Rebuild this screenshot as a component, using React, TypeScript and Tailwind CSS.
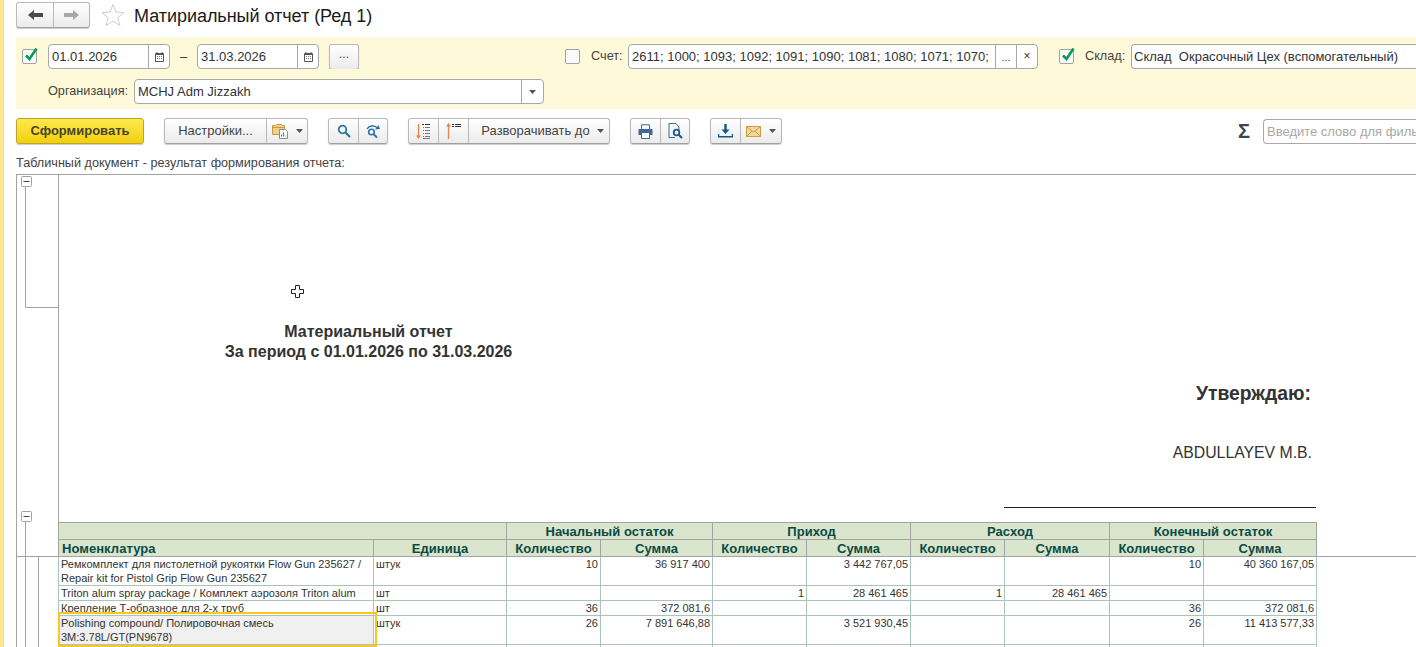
import React from "react";

const Check = ({ on }: { on?: boolean }) => (
  <span className="relative block w-[15px] h-[15px] shrink-0 rounded-[2px] border border-[#a3a3a3] bg-[#fafafa]">
    {on && (
      <svg className="absolute left-[1px] top-[-4px]" width="15" height="16" viewBox="0 0 15 16">
        <path d="M2 9.5 L5.5 13 L12.5 2.5" fill="none" stroke="#0b9b50" strokeWidth="2.6" />
      </svg>
    )}
  </span>
);

const Calendar = () => (
  <svg width="9" height="10" viewBox="0 0 9 10">
    <path d="M0.5 1.5h8v8h-8z" fill="none" stroke="#555" />
    <path d="M1 1h7v2H1z" fill="#555" />
    <path d="M2 0v2M7 0v2" stroke="#555" />
    <path d="M2 4.5h1M4 4.5h1M6 4.5h1M2 6.5h1M4 6.5h1M6 6.5h1" stroke="#777" />
  </svg>
);

const Caret = () => (
  <svg width="7" height="4" viewBox="0 0 7 4" className="shrink-0">
    <path d="M0 0h7L3.5 4z" fill="#555" />
  </svg>
);

const DateField = ({ v }: { v: string }) => (
  <div className="flex h-[25px] w-[122px] shrink-0 rounded-[4px] border border-[#a8a8a8] bg-white">
    <div className="flex w-[100px] items-center border-r border-[#a8a8a8] pl-[3px] text-[13px] text-[#333]">{v}</div>
    <div className="flex flex-1 items-center justify-center"><Calendar /></div>
  </div>
);

const btn =
  "flex h-[26px] items-stretch rounded-[3px] border border-[#b9b9b9] border-b-[#9f9f9f] bg-gradient-to-b from-white to-[#ebebeb] shadow-[0_1px_1px_rgba(0,0,0,0.2)] text-[#444]";

const Seg = ({ w, children, last }: { w: string; children?: React.ReactNode; last?: boolean }) => (
  <div className={`flex items-center justify-center ${w} ${last ? "" : "border-r border-[#b9b9b9]"}`}>{children}</div>
);

const Search = () => (
  <svg width="14" height="14" viewBox="0 0 14 14">
    <circle cx="5.5" cy="5.5" r="3.8" fill="none" stroke="#2d74a8" strokeWidth="1.8" />
    <path d="M8.5 8.5L13 13" stroke="#2d74a8" strokeWidth="2.2" />
  </svg>
);

const SearchAgain = () => (
  <svg width="15" height="15" viewBox="0 0 15 15">
    <circle cx="5.5" cy="8" r="2.8" fill="none" stroke="#2d74a8" strokeWidth="1.6" />
    <path d="M7.8 10.3L11 13.6" stroke="#2d74a8" strokeWidth="2" />
    <path d="M1 5C3 1.5 8 1 11 3.5" fill="none" stroke="#2d74a8" strokeWidth="1.4" />
    <path d="M9 5.5L14 5L12.5 1z" fill="#2d74a8" />
  </svg>
);

const SortDown = () => (
  <svg width="15" height="17" viewBox="0 0 15 17">
    <path d="M2.5 1v14" stroke="#e8824a" strokeWidth="1.3" />
    <path d="M0 12.5h5L2.5 16z" fill="#e8824a" />
    <path d="M6 1.5h2M9 1.5h5" stroke="#333" />
    <path d="M9 4.5h5M9 7.5h5M9 10.5h5M9 13.5h5M7 4.5h1M7 7.5h1M7 10.5h1M7 13.5h1M7 15.5h7" stroke="#777" />
  </svg>
);

const SortUp = () => (
  <svg width="15" height="17" viewBox="0 0 15 17" className="mt-[-1px]">
    <path d="M2.5 2v15" stroke="#e8824a" strokeWidth="1.3" />
    <path d="M0 4.5h5L2.5 1z" fill="#e8824a" />
    <path d="M6 2.500h2M6 4.500h2M9 2.500h6M9 4.500h6" stroke="#333" />
  </svg>
);

const Printer = () => (
  <svg width="15" height="15" viewBox="0 0 15 15">
    <path d="M3.500 5V0.800h8V5" fill="none" stroke="#3d6a94" />
    <path d="M0.500 5h14v6h-14z" fill="#3d6a94" />
    <path d="M3.500 8.500h8v6h-8z" fill="#fff" stroke="#3d6a94" />
  </svg>
);

const Preview = () => (
  <svg width="15" height="16" viewBox="0 0 15 16">
    <path d="M1 .5h7l3 3.500V7M1 .5V14.500h6" fill="none" stroke="#3d6a94" />
    <circle cx="8.500" cy="9.500" r="2.800" fill="none" stroke="#1f5a88" strokeWidth="1.800" />
    <path d="M10.500 11.500L14 15" stroke="#1f5a88" strokeWidth="2.200" />
  </svg>
);

const Download = () => (
  <svg width="15" height="14" viewBox="0 0 15 14">
    <path d="M7.500 0v6" stroke="#0f5a8c" strokeWidth="2.400" />
    <path d="M3.500 5.500h8l-4 4.500z" fill="#0f5a8c" />
    <path d="M.5 10v2.700h14V10" fill="none" stroke="#0f5a8c" strokeWidth="1.400" />
  </svg>
);

const Mail = () => (
  <svg width="15" height="11" viewBox="0 0 15 11">
    <path d="M.5 .5h14v10H.5z" fill="#f5d99a" stroke="#cf9a45" />
    <path d="M.5 .5L7.500 6l7-5.500M.5 10.500L6 5M14.500 10.500L9 5" fill="none" stroke="#cf9a45" />
  </svg>
);

const Folder = () => (
  <svg width="17" height="16" viewBox="0 0 17 16">
    <path d="M.5 2.500h3l1-1h5l1 1h2v9H.5z" fill="#f3cf86" stroke="#c59a4a" />
    <path d="M.5 4.500h12" stroke="#c59a4a" />
    <path d="M7.500 6.500h6l2 2v7h-8z" fill="#fff" stroke="#7f8fa0" />
    <path d="M9.500 13.500v-2" stroke="#d9483a" strokeWidth="1.200" />
    <path d="M11.500 13.500v-4" stroke="#3fa34d" strokeWidth="1.200" />
    <path d="M13.500 13.500v-1" stroke="#e0a020" strokeWidth="1.200" />
  </svg>
);

const cols = [315, 133, 94, 112, 94, 104, 94, 105, 94, 113];

const rows: { h: string; name: React.ReactNode; unit: string; v: string[] }[] = [
  {
    h: "h-[29px]",
    name: <>Ремкомплект для пистолетной рукоятки Flow Gun 235627 /<br />Repair kit for Pistol Grip Flow Gun 235627</>,
    unit: "штук",
    v: ["10", "36 917 400", "", "3 442 767,05", "", "", "10", "40 360 167,05"],
  },
  {
    h: "h-[15px]",
    name: "Triton alum spray package / Комплект аэрозоля Triton alum",
    unit: "шт",
    v: ["", "", "1", "28 461 465", "1", "28 461 465", "", ""],
  },
  {
    h: "h-[15px]",
    name: "Крепление Т-образное для 2-х труб",
    unit: "шт",
    v: ["36", "372 081,6", "", "", "", "", "36", "372 081,6"],
  },
  {
    h: "h-[29px]",
    name: <>Polishing compound/ Полировочная смесь<br />3M:3.78L/GT(PN9678)</>,
    unit: "штук",
    v: ["26", "7 891 646,88", "", "3 521 930,45", "", "", "26", "11 413 577,33"],
  },
];

const th = "border border-[#a3a3a3] bg-[#d9e5cc] p-0 text-center align-middle text-[13px] font-bold leading-[15px] text-[#0a4a46] tracking-[0.05px]";
const td = "border border-[#a9c4b8] px-[4px] py-0 align-top text-[11px] leading-[14px] text-[#333] overflow-hidden whitespace-nowrap";

export default function App() {
  return (
    <div className="relative flex h-[647px] w-[1416px] overflow-hidden bg-white font-['Liberation_Sans',Arial,sans-serif]">
      <div className="w-[4px] shrink-0 border-r border-[#d8d8d8] bg-[#fbe88f]" />
      <div className="flex min-w-0 flex-1 flex-col pl-[12px]">
        {/* title */}
        <div className="mt-[3px] flex h-[24px] items-center">
          <div className={`${btn} h-[24px] w-[74px]`}>
            <Seg w="w-[37px]">
              <svg width="15" height="10" viewBox="0 0 15 10"><path d="M0 5L6 0v3h9v4H6v3z" fill="#4a4a4a" /></svg>
            </Seg>
            <Seg w="flex-1" last>
              <svg width="15" height="10" viewBox="0 0 15 10"><path d="M15 5L9 0v3H0v4h9v3z" fill="#a8a8a8" /></svg>
            </Seg>
          </div>
          <svg className="ml-[11px]" width="24" height="24" viewBox="0 0 24 24">
            <path d="M12 1.500l3 7.500 8 .6-6.100 5.100 2 7.800L12 18.200 5.100 22.500l2-7.800L1 9.600l8-.6z" fill="#fff" stroke="#c9ced6" />
          </svg>
          <div className="ml-[9px] pt-[2px] text-[18px] leading-[24px] tracking-[-0.04px] text-[#1a1a1a]">Матириальный отчет (Ред 1)</div>
        </div>

        {/* filter panel */}
        <div className="mt-[10px] flex h-[72px] flex-col gap-[10px] bg-[#fef9d9] pt-[7px] text-[13px] text-[#444]">
          <div className="flex h-[25px] items-center overflow-hidden">
            <div className="ml-[6px]"><Check on /></div>
            <div className="ml-[11px]"><DateField v="01.01.2026" /></div>
            <div className="w-[27px] text-center text-[#333]">–</div>
            <DateField v="31.03.2026" />
            <div className={`${btn} ml-[10px] h-[25px] w-[30px] items-center justify-center text-[12px]`}>...</div>
            <div className="ml-[206px]"><Check /></div>
            <div className="ml-[11px] w-[37px] text-[12.7px]">Счет:</div>
            <div className="flex h-[25px] w-[410px] shrink-0 rounded-[4px] border border-[#a8a8a8] bg-white text-[#333]">
              <div className="w-[367px] overflow-hidden whitespace-nowrap border-r border-[#a8a8a8] pl-[3px] leading-[23px]">2611; 1000; 1093; 1092; 1091; 1090; 1081; 1080; 1071; 1070;</div>
              <div className="w-[21px] border-r border-[#a8a8a8] text-center text-[11px] leading-[24px]">...</div>
              <div className="flex-1 text-center text-[12px] leading-[22px]">×</div>
            </div>
            <div className="ml-[21px]"><Check on /></div>
            <div className="ml-[11px] w-[46px] text-[12.7px]">Склад:</div>
            <div className="h-[25px] flex-1 whitespace-nowrap rounded-l-[4px] border border-r-0 border-[#a8a8a8] bg-white pl-[2px] leading-[23px] text-[#333]">Склад&nbsp; Окрасочный Цех (вспомогательный)</div>
          </div>
          <div className="flex h-[25px] items-center">
            <div className="ml-[32px] w-[86px] text-[12.7px]">Организация:</div>
            <div className="flex h-[25px] w-[410px] rounded-[4px] border border-[#a8a8a8] bg-white text-[#333]">
              <div className="w-[387px] border-r border-[#a8a8a8] pl-[3px] leading-[23px]">MCHJ Adm Jizzakh</div>
              <div className="flex flex-1 items-center justify-center"><Caret /></div>
            </div>
          </div>
        </div>

        {/* toolbar */}
        <div className="mt-[9px] flex h-[26px] items-center pr-0 text-[13px]">
          <div className="flex h-[26px] w-[128px] items-center justify-center rounded-[3px] border border-[#bda32c] bg-gradient-to-b from-[#ffe84a] to-[#f1d000] font-bold text-[#4a4426] shadow-[0_1px_1px_rgba(0,0,0,0.2)]">Сформировать</div>
          <div className={`${btn} ml-[20px] w-[144px]`}>
            <Seg w="w-[102px]">Настройки...</Seg>
            <Seg w="flex-1 gap-[7px]" last><Folder /><Caret /></Seg>
          </div>
          <div className={`${btn} ml-[20px] w-[60px]`}>
            <Seg w="w-[30px]"><Search /></Seg>
            <Seg w="flex-1" last><SearchAgain /></Seg>
          </div>
          <div className={`${btn} ml-[20px] w-[202px]`}>
            <Seg w="w-[30px]"><SortDown /></Seg>
            <Seg w="w-[30px]"><SortUp /></Seg>
            <Seg w="flex-1 gap-[7px] pl-[7px]" last><span>Разворачивать до</span><Caret /></Seg>
          </div>
          <div className={`${btn} ml-[20px] w-[60px]`}>
            <Seg w="w-[30px]"><Printer /></Seg>
            <Seg w="flex-1" last><Preview /></Seg>
          </div>
          <div className={`${btn} ml-[20px] w-[72px]`}>
            <Seg w="w-[30px]"><Download /></Seg>
            <Seg w="flex-1 gap-[8px]" last><Mail /><Caret /></Seg>
          </div>
          <div className="ml-[456px] w-[25px] text-[20px] font-bold leading-[26px] text-[#37474f]">Σ</div>
          <div className="h-[25px] flex-1 overflow-hidden whitespace-nowrap rounded-l-[4px] border border-r-0 border-[#a8a8a8] bg-white pl-[3px] leading-[23px] text-[#a8a8a8]">Введите слово для фильтра</div>
        </div>

        <div className="mb-[3px] mt-[12px] h-[15px] text-[12.65px] leading-[15px] text-[#444]">Табличный документ - результат формирования отчета:</div>

        {/* spreadsheet */}
        <div className="flex min-h-0 flex-1 overflow-hidden border-l border-t border-[#a3a3a3]">
          <svg width="41" height="472" viewBox="0 0 41 472" className="shrink-0">
            <g fill="none" stroke="#a3a3a3">
              <path d="M8.500 12v120.500H41" />
              <path d="M8.500 346v126" />
              <path d="M0 381.500H41" />
              <path d="M21.500 381.500V472" />
              <rect x="4.500" y="1.500" width="10" height="10" rx="1" fill="#fff" />
              <rect x="4.500" y="336.500" width="10" height="10" rx="1" fill="#fff" />
            </g>
            <path d="M6.500 6.500h6M6.500 341.500h6" stroke="#444" />
          </svg>
          <div className="flex min-w-0 flex-1 flex-col border-l border-[#a3a3a3]">
            <div className="h-[347px] shrink-0 text-[#333]">
              <div className="w-[619px] pt-[147px] text-center text-[16px] font-bold leading-[20px]">
                <div>Материальный отчет</div>
                <div>За период с 01.01.2026 по 31.03.2026</div>
              </div>
              <div className="mt-[21px] w-[1252px] text-right text-[19.33px] font-bold leading-[22px]">Утверждаю:</div>
              <div className="mt-[39px] w-[1253px] text-right text-[15.8px] leading-[18px]">ABDULLAYEV M.B.</div>
              <div className="ml-[945px] mt-[45px] w-[312px] border-t border-[#222]" />
            </div>
            <div className="-ml-[1px] flex shrink-0">
              <div className="relative shrink-0">
                <table className="w-[1258px] table-fixed border-collapse">
                  <colgroup>
                    {cols.map((w, i) => <col key={i} style={{ width: w }} />)}
                  </colgroup>
                  <thead>
                    <tr className="h-[17px]">
                      <th colSpan={2} className={th} />
                      <th colSpan={2} className={th}>Начальный остаток</th>
                      <th colSpan={2} className={th}>Приход</th>
                      <th colSpan={2} className={th}>Расход</th>
                      <th colSpan={2} className={th}>Конечный остаток</th>
                    </tr>
                    <tr className="h-[17px]">
                      <th className={`${th} pl-[3px] !text-left`}>Номенклатура</th>
                      <th className={th}>Единица</th>
                      {[0, 1, 2, 3].flatMap((g) => [
                        <th key={`q${g}`} className={th}>Количество</th>,
                        <th key={`s${g}`} className={th}>Сумма</th>,
                      ])}
                    </tr>
                  </thead>
                  <tbody>
                    {rows.map((r, i) => (
                      <tr key={i} className={r.h}>
                        <td className={`${td} !px-[2px] ${i === 3 ? "bg-[#f0f0f0]" : ""}`}>{r.name}</td>
                        <td className={`${td} !px-[2px]`}>{r.unit}</td>
                        {r.v.map((x, k) => <td key={k} className={`${td} !px-[2px] text-right`}>{x}</td>)}
                      </tr>
                    ))}
                    <tr className="h-[15px]">
                      {cols.map((_, k) => <td key={k} className={td} />)}
                    </tr>
                  </tbody>
                </table>
                <div className="pointer-events-none absolute left-0 top-[90px] h-[35px] w-[319px] border-2 border-[#f8c81c]" />
              </div>
              <div className="h-[35px] flex-1 border-b border-[#a3a3a3]" />
            </div>
          </div>
        </div>
      </div>
      <svg className="pointer-events-none absolute left-[291px] top-[285px]" width="13" height="14" viewBox="0 0 13 14">
        <path d="M4.500 .5h4v4h4v4h-4v4h-4v-4h-4v-4h4z" fill="#fff" stroke="#222" />
      </svg>
    </div>
  );
}
